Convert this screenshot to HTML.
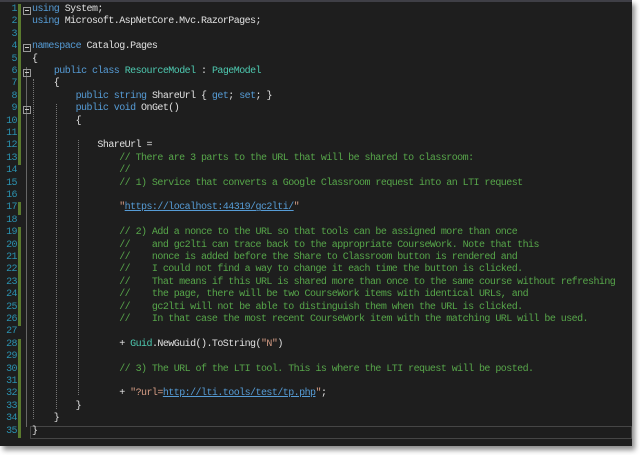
<!DOCTYPE html>
<html><head><style>
body{margin:0;width:640px;height:455px;background:#fff;overflow:hidden;position:relative}
#ed{position:absolute;left:0;top:0;width:632px;height:444px;background:#1e1e1e;border-top:2px solid #3f3f46;box-shadow:3px 4px 5px rgba(0,0,0,.45)}
.ln{position:absolute;left:0;width:17px;text-align:right;color:#2b91af}
.l{position:absolute;left:32px;white-space:pre;color:#e0e0e0}
.r{font-family:"Liberation Mono",monospace;font-size:10px;letter-spacing:-0.55px;line-height:12.4px;height:12.4px}
.k{color:#569cd6}.t{color:#4ec9b0}.c{color:#57a64a}.s{color:#d69d85}.u{color:#569cd6;text-decoration:underline}
.g{position:absolute;left:18px;width:3px;background:#5a7a2e;height:12.4px}
.cur{position:absolute;left:30px;right:0;border:1px solid #464646;height:11px}
.f{position:absolute;left:23px;width:6px;height:6px;border:1px solid #999}
.f:after{content:"";position:absolute;left:1px;top:2.5px;width:4px;height:1px;background:#ccc}
.v{position:absolute;width:0;border-left:1px dotted #777}
</style></head><body><div id="ed">
<div class="cur" style="top:424px"></div>
<div class="v" style="left:26px;top:65px;height:360px;border-left:1px solid #666"></div>
<div class="v" style="left:33px;top:77px;height:340px"></div>
<div class="v" style="left:56px;top:102px;height:305px"></div>
<div class="v" style="left:78px;top:138px;height:255px"></div>
<div id="c"></div>
</div>
<script>
var L=[
'<span class="k">using</span> System;',
'<span class="k">using</span> Microsoft.AspNetCore.Mvc.RazorPages;',
'',
'<span class="k">namespace</span> Catalog.Pages',
'{',
'    <span class="k">public</span> <span class="k">class</span> <span class="t">ResourceModel</span> : <span class="t">PageModel</span>',
'    {',
'        <span class="k">public</span> <span class="k">string</span> ShareUrl { <span class="k">get</span>; <span class="k">set</span>; }',
'        <span class="k">public</span> <span class="k">void</span> OnGet()',
'        {',
'',
'            ShareUrl =',
'                <span class="c">// There are 3 parts to the URL that will be shared to classroom:</span>',
'                <span class="c">//</span>',
'                <span class="c">// 1) Service that converts a Google Classroom request into an LTI request</span>',
'',
'                <span class="s">"<span class="u">https://localhost:44319/gc2lti/</span>"</span>',
'',
'                <span class="c">// 2) Add a nonce to the URL so that tools can be assigned more than once</span>',
'                <span class="c">//    and gc2lti can trace back to the appropriate CourseWork. Note that this</span>',
'                <span class="c">//    nonce is added before the Share to Classroom button is rendered and</span>',
'                <span class="c">//    I could not find a way to change it each time the button is clicked.</span>',
'                <span class="c">//    That means if this URL is shared more than once to the same course without refreshing</span>',
'                <span class="c">//    the page, there will be two CourseWork items with identical URLs, and</span>',
'                <span class="c">//    gc2lti will not be able to distinguish them when the URL is clicked.</span>',
'                <span class="c">//    In that case the most recent CourseWork item with the matching URL will be used.</span>',
'',
'                + <span class="t">Guid</span>.NewGuid().ToString(<span class="s">"N"</span>)',
'',
'                <span class="c">// 3) The URL of the LTI tool. This is where the LTI request will be posted.</span>',
'',
'                + <span class="s">"?url=<span class="u">http://lti.tools/test/tp.php</span>"</span>;',
'        }',
'    }',
'}'];
var green=[1,2,3,4,5,6,7,8,9,10,11,12,13,17,19,20,21,22,23,24,25,26,28,29,30,31,32,33,34,35];
var folds=[1,4,6,9];
var h='';
for(var i=0;i<L.length;i++){var y=2+i*12.4;
h+='<div class="ln r" style="top:'+y.toFixed(1)+'px">'+(i+1)+'</div>';
if(green.indexOf(i+1)>=0)h+='<div class="g" style="top:'+y.toFixed(1)+'px"></div>';
if(folds.indexOf(i+1)>=0)h+='<div class="f" style="top:'+(y+2.5).toFixed(1)+'px"></div>';
h+='<div class="l r" style="top:'+y.toFixed(1)+'px">'+L[i]+'</div>';}
document.getElementById('c').innerHTML=h;
</script></body></html>
